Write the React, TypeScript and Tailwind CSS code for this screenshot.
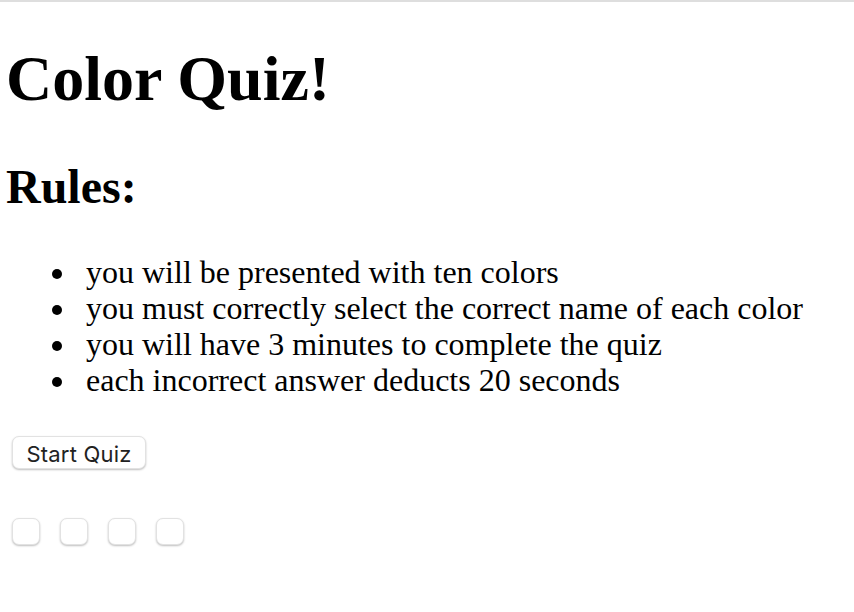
import React from "react";

const RULES = [
  "you will be presented with ten colors",
  "you must correctly select the correct name of each color",
  "you will have 3 minutes to complete the quiz",
  "each incorrect answer deducts 20 seconds",
];

export default function App() {
  return (
    <div className="min-h-[612px] bg-white text-black font-['Liberation_Serif',serif]">
      <div className="h-[2px] bg-[#dedede]" />
      <div className="px-[8px]">
        {/* Header */}
        <h1 className="mt-[40px] -ml-[2px] text-[64px] leading-[74px] font-bold">Color Quiz!</h1>
        <h2 className="mt-[43px] -ml-[2px] text-[48px] leading-[55px] font-bold">Rules:</h2>

        {/* Rules list */}
        <ul className="mt-[40px] pl-[44px] text-[32px] leading-[36px]">
          {RULES.map((rule) => (
            <li key={rule} className="flex items-start">
              <span className="mt-[15px] w-[10px] h-[10px] rounded-full bg-black shrink-0" />
              <span className="ml-[24px]">{rule}</span>
            </li>
          ))}
        </ul>

        {/* Start button */}
        <button className="mt-[38px] ml-[4px] h-[33px] w-[134px] pt-[3px] rounded-[7px] bg-white border border-[#e2e2e2] shadow-[0_1px_2px_rgba(0,0,0,0.25)] text-[22px] tracking-[0.2px] text-[#222] font-['Inter',sans-serif] flex items-center justify-center">
          Start Quiz
        </button>

        {/* Answer boxes */}
        <div className="mt-[49px] ml-[4px] flex gap-[20px]">
          {[0, 1, 2, 3].map((i) => (
            <div
              key={i}
              className="w-[28px] h-[27px] rounded-[7px] bg-white border border-[#e2e2e2] shadow-[0_1px_2px_rgba(0,0,0,0.25)]"
            />
          ))}
        </div>
      </div>
    </div>
  );
}
